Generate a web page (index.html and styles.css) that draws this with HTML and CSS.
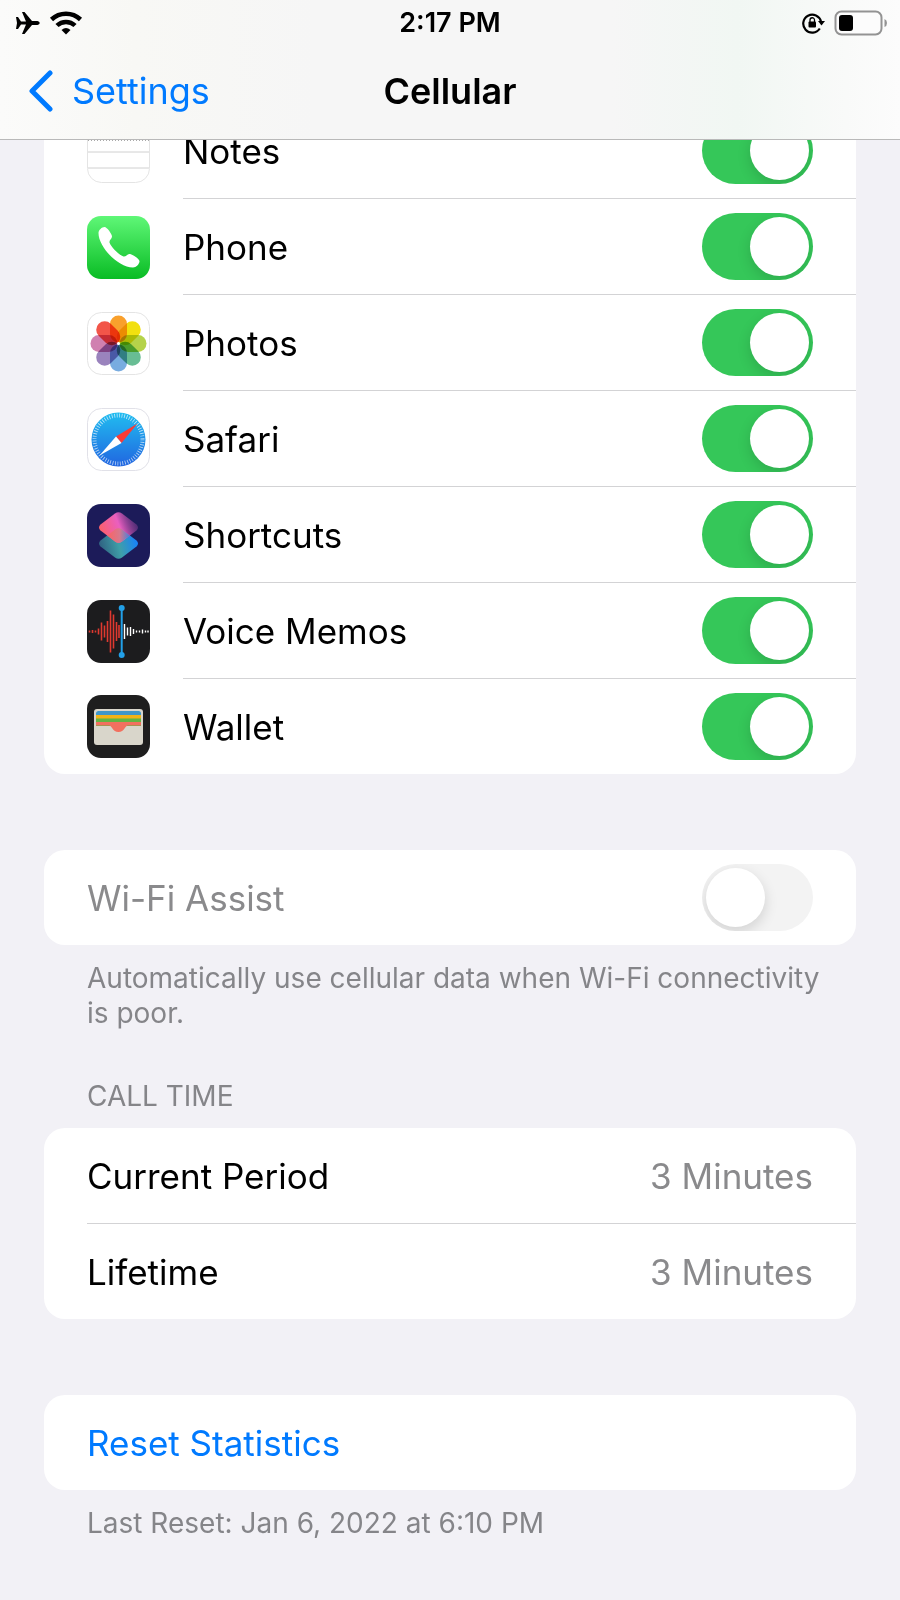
FILE: index.html
```html
<!DOCTYPE html>
<html lang="en">
<head>
  <meta charset="UTF-8">
  <meta name="viewport" content="width=device-width, initial-scale=1">
  <title>Cellular</title>
  <link rel="stylesheet" href="styles.css">
</head>
<body>
  <header class="header">
    <div class="status-bar">
      <div class="status-left">
        <svg width="24" height="22" viewBox="0 0 24 22"><path d="M0 5h2l3 4.500h5L6 0h2.500l7.500 9h5.500q2 .6 2.300 2q-.3 1.400-2.300 2H16l-7.500 9H6l4-9.500H5L2 17H0l1-6z"/></svg>
        <svg width="34" height="24" viewBox="0 0 34 24">
          <path d="M2.500 8.500a21 21 0 0 1 29 0" fill="none" stroke="#000" stroke-width="4.500"/>
          <path d="M8 14.500a13 13 0 0 1 18 0" fill="none" stroke="#000" stroke-width="4.500"/>
          <path d="M12.500 19q4.500-4 9 0L17 23.500z"/>
        </svg>
      </div>
      <time class="clock">2:17 PM</time>
      <div class="status-right">
        <svg width="23" height="22" viewBox="0 0 23 22">
          <path d="M17.800 16.500A9 9 0 1 1 19 9.500" fill="none" stroke="#000" stroke-width="2.200"/>
          <path d="M16 9h7l-3.500 4.500z"/>
          <rect x="6.500" y="9.500" width="7.500" height="6" rx="1"/>
          <path d="M8 10V8a2.250 2.250 0 0 1 4.500 0v2" fill="none" stroke="#000" stroke-width="1.300"/>
        </svg>
        <svg width="54" height="26" viewBox="0 0 54 26">
          <rect x="1.500" y="1.500" width="46" height="23" rx="6" fill="#fcfcfc" stroke="#939393" stroke-width="2"/>
          <rect x="5" y="5" width="14" height="16" rx="3"/>
          <path d="M50.500 9q2.500 1 2.500 4t-2.500 4z" fill="#939393"/>
        </svg>
      </div>
    </div>
    <nav class="nav">
      <a href="#" class="back">
        <svg width="26" height="42" viewBox="0 0 26 42"><path d="M22 3L4 21l18 18" fill="none" stroke="#007aff" stroke-width="5" stroke-linecap="round" stroke-linejoin="round"/></svg>
        Settings
      </a>
      <h1>Cellular</h1>
    </nav>
  </header>

  <main>
    <ul class="card apps">
      <li class="row">
        <svg class="app-icon" viewBox="0 0 63 63">
          <rect x=".5" y=".5" width="62" height="62" rx="14" fill="#fff" stroke="#e4e4e4"/>
          <path d="M.5 17V14.500a14 14 0 0 1 14-14h34a14 14 0 0 1 14 14V17z" fill="#fc0"/>
          <path d="M1 20.500h61" stroke="#aaa" stroke-dasharray="1 2"/>
          <path d="M1 32h61M1 48h61" stroke="#d0d0d0"/>
        </svg>
        <div class="row-body">
          <label for="notes">Notes</label>
          <input type="checkbox" class="switch" id="notes" checked>
        </div>
      </li>
      <li class="row">
        <svg class="app-icon" viewBox="0 0 63 63">
          <defs><linearGradient id="phoneBg" x2="0" y2="1"><stop stop-color="#5ff777"/><stop offset="1" stop-color="#09bc24"/></linearGradient></defs>
          <rect width="63" height="63" rx="14" fill="url(#phoneBg)"/>
          <path d="M11.500 17C11.500 14 15 11 17.500 11C20 11 25 18 25 20.500C25 23 22 24 22.500 26.500C24 31 32 39 36.500 40.500C39 41 40.500 37.500 43 38C45.500 38.500 52 42.500 52.500 45C52.500 48 49 51.500 46 51.500C31 51.500 11.500 31 11.500 17Z" fill="#fff"/>
        </svg>
        <div class="row-body">
          <label for="phone">Phone</label>
          <input type="checkbox" class="switch" id="phone" checked>
        </div>
      </li>
      <li class="row">
        <svg class="app-icon" viewBox="0 0 63 63">
          <rect x=".5" y=".5" width="62" height="62" rx="14" fill="#fff" stroke="#e4e4e4"/>
          <g class="petals" transform="translate(31.500 31.500)">
            <rect x="-8.500" y="-28" width="17" height="27" rx="8.500" fill="#f9a02c"/>
            <rect x="-8.500" y="-28" width="17" height="27" rx="8.500" fill="#f2e00f" transform="rotate(45)"/>
            <rect x="-8.500" y="-28" width="17" height="27" rx="8.500" fill="#b5d34a" transform="rotate(90)"/>
            <rect x="-8.500" y="-28" width="17" height="27" rx="8.500" fill="#68bd94" transform="rotate(135)"/>
            <rect x="-8.500" y="-28" width="17" height="27" rx="8.500" fill="#78ace0" transform="rotate(180)"/>
            <rect x="-8.500" y="-28" width="17" height="27" rx="8.500" fill="#9a83bd" transform="rotate(225)"/>
            <rect x="-8.500" y="-28" width="17" height="27" rx="8.500" fill="#d080b0" transform="rotate(270)"/>
            <rect x="-8.500" y="-28" width="17" height="27" rx="8.500" fill="#f25549" transform="rotate(315)"/>
          </g>
          <circle cx="31.500" cy="31.500" r="1.500" fill="#fff"/>
        </svg>
        <div class="row-body">
          <label for="photos">Photos</label>
          <input type="checkbox" class="switch" id="photos" checked>
        </div>
      </li>
      <li class="row">
        <svg class="app-icon" viewBox="0 0 63 63">
          <defs><linearGradient id="safariBg" x2="0" y2="1"><stop stop-color="#21bdf0"/><stop offset="1" stop-color="#2165e0"/></linearGradient></defs>
          <rect x=".5" y=".5" width="62" height="62" rx="14" fill="#fff" stroke="#e1e1e8"/>
          <circle cx="31.500" cy="31.500" r="27" fill="url(#safariBg)"/>
          <circle cx="31.500" cy="31.500" r="24" fill="none" stroke="#fff" stroke-opacity=".7" stroke-width="4" stroke-dasharray=".8 1.713"/>
          <path d="M50.500 15.500L34.500 35L29 28.500z" fill="#fb3b36"/>
          <path d="M12.500 47.500L29 28.500L34.500 35z" fill="#fff"/>
        </svg>
        <div class="row-body">
          <label for="safari">Safari</label>
          <input type="checkbox" class="switch" id="safari" checked>
        </div>
      </li>
      <li class="row">
        <svg class="app-icon" viewBox="0 0 63 63">
          <defs>
            <linearGradient id="layerTop" x1="0" y1=".7" x2="1" y2=".4"><stop stop-color="#ff6060"/><stop offset=".55" stop-color="#ea5fc0"/><stop offset="1" stop-color="#7b3a8c" stop-opacity=".5"/></linearGradient>
            <linearGradient id="layerBottom" x1="0" y1=".6" x2="1" y2=".4"><stop stop-color="#2f5f80"/><stop offset=".5" stop-color="#3f9fa8"/><stop offset="1" stop-color="#1580ff"/></linearGradient>
            <linearGradient id="layerMix" x1="0" x2="1"><stop stop-color="#fb6464"/><stop offset=".55" stop-color="#d8788c"/><stop offset="1" stop-color="#4a80d8"/></linearGradient>
          </defs>
          <rect width="63" height="63" rx="14" fill="#1c1b59"/>
          <path d="M28 25.500Q31.500 23 35 25.500L49.500 36.500Q52.500 39.500 49.500 42.500L35 53.500Q31.500 56 28 53.500L13.500 42.500Q10.500 39.500 13.500 36.500z" fill="url(#layerBottom)"/>
          <path d="M28 9.500Q31.500 7 35 9.500L49.500 20.500Q52.500 23.500 49.500 26.500L35 37.500Q31.500 40 28 37.500L13.500 26.500Q10.500 23.500 13.500 20.500z" fill="url(#layerTop)"/>
          <path d="M20.500 31.500L28 25.500Q31.500 23 35 25.500L42.500 31.500L35 37.500Q31.500 40 28 37.500z" fill="url(#layerMix)"/>
        </svg>
        <div class="row-body">
          <label for="shortcuts">Shortcuts</label>
          <input type="checkbox" class="switch" id="shortcuts" checked>
        </div>
      </li>
      <li class="row">
        <svg class="app-icon" viewBox="0 0 63 63">
          <rect width="63" height="63" rx="14" fill="#1c1c1e"/>
          <path d="M2.500 30.500v2M5.500 30v3M8.500 30.500v2M11.500 28.500v6M14.500 22.500v18M17.500 25.500v12M20.500 21v21M23.500 10.500v42M26.500 14.500v34M29.500 22v19M32 25v13" stroke="#e0392f" stroke-width="1.600"/>
          <path d="M37.500 24v15M40.500 27.500v8M43.500 27v9M46.500 29v5M49.500 30.500v2M52.500 30.500v2M55.500 29.500v4M58.500 30.500v2M61 30.500v2" stroke="#fff" stroke-width="1.400"/>
          <path d="M34.700 8v47" stroke="#22a0e8" stroke-width="2"/>
          <circle cx="34.700" cy="8" r="3" fill="#22a0e8"/>
          <circle cx="34.700" cy="55" r="3" fill="#22a0e8"/>
        </svg>
        <div class="row-body">
          <label for="voice-memos">Voice Memos</label>
          <input type="checkbox" class="switch" id="voice-memos" checked>
        </div>
      </li>
      <li class="row">
        <svg class="app-icon" viewBox="0 0 63 63">
          <rect width="63" height="63" rx="14" fill="#1e1e1e"/>
          <rect x="7" y="14" width="49" height="36" rx="3" fill="#d9d6cb"/>
          <path d="M9 31V18.500Q9 16 11.500 16h40Q54 16 54 18.500V31z" fill="#3f97c9"/>
          <path d="M9 20h45v11H9z" fill="#f3b316"/>
          <path d="M9 23.500h45V31H9z" fill="#63b444"/>
          <path d="M9 27h45v3.500H41c-3 0-3.500 6.500-9.500 6.500s-6.500-6.500-9.500-6.500H9z" fill="#f2705f"/>
        </svg>
        <div class="row-body">
          <label for="wallet">Wallet</label>
          <input type="checkbox" class="switch" id="wallet" checked>
        </div>
      </li>
    </ul>

    <section class="group">
      <div class="card">
        <div class="row">
          <div class="row-body disabled">
            <label for="wifi-assist">Wi-Fi Assist</label>
            <input type="checkbox" class="switch" id="wifi-assist" disabled>
          </div>
        </div>
      </div>
      <p class="note">Automatically use cellular data when Wi-Fi connectivity is poor.</p>
    </section>

    <section class="call-time">
      <h2>CALL TIME</h2>
      <dl class="card">
        <div class="row">
          <div class="row-body"><dt>Current Period</dt><dd>3 Minutes</dd></div>
        </div>
        <div class="row">
          <div class="row-body"><dt>Lifetime</dt><dd>3 Minutes</dd></div>
        </div>
      </dl>
    </section>

    <section class="group">
      <div class="card">
        <button type="button" class="reset">Reset Statistics</button>
      </div>
      <p class="note">Last Reset: Jan 6, 2022 at 6:10 PM</p>
    </section>
  </main>
</body>
</html>
```

FILE: styles.css
```css
* {
  box-sizing: border-box;
}
body {
  margin: 0;
  background-color: #f2f1f6;
  color: #000;
  font-family: Inter, "Liberation Sans", sans-serif;
  font-size: 35px;
  line-height: 44px;
}
h1, h2, p, ul, dl, dd {
  margin: 0;
  padding: 0;
}
svg {
  display: block;
  flex: none;
}

/* Header */
.header {
  position: sticky;
  top: 0;
  z-index: 1;
  border-bottom: 1px solid #b9b9b9;
  background: linear-gradient(90deg, #fbfbfa 0%, #f8f8f5 15%, #f6f6f6 35%, #f6f6f6 68%, #f1f7f3 82%, #f9faf9 94%, #fcfcfc 100%);
}
.status-bar {
  display: grid;
  grid-template-columns: 1fr auto 1fr;
  align-items: center;
  height: 46px;
  padding: 0 12px;
}
.status-left,
.status-right {
  display: flex;
  align-items: center;
  gap: 9px;
}
.status-left {
  padding-left: 4px;
}
.status-right {
  justify-content: flex-end;
}
.clock {
  font-size: 27px;
  font-weight: 600;
}
.nav {
  display: grid;
  grid-template-columns: 1fr auto 1fr;
  align-items: center;
  height: 93px;
  padding: 0 28px 3px;
}
.back {
  display: flex;
  align-items: center;
  gap: 18px;
  color: #007aff;
  font-size: 36px;
  text-decoration: none;
}
h1 {
  font-size: 36px;
  font-weight: 600;
}

/* Lists */
main {
  padding: 0 44px;
}
.card {
  border-radius: 21px;
  background-color: #fff;
  overflow: hidden;
}
/* the list is scrolled part way under the header */
.apps {
  margin-top: -37px;
  list-style: none;
}
.row {
  display: flex;
  align-items: center;
  padding-left: 43px;
}
.row-body {
  flex: 1;
  display: flex;
  align-items: center;
  justify-content: space-between;
  height: 96px;
  padding-right: 43px;
  border-bottom: 1px solid #d3d3d5;
}
.row:last-child .row-body {
  height: 95px;
  border-bottom: none;
}
.app-icon {
  width: 63px;
  height: 63px;
  margin-right: 33px;
}
.petals rect {
  mix-blend-mode: multiply;
}
.disabled,
dd {
  color: #8a8a8c;
}

/* Switches */
.switch {
  appearance: none;
  display: flex;
  width: 111px;
  height: 67px;
  margin: 0;
  padding: 4px;
  border-radius: 34px;
  background-color: #f3f3f3;
  overflow: hidden;
}
.switch::before {
  content: "";
  width: 59px;
  height: 59px;
  border-radius: 50%;
  background-color: #fff;
  box-shadow: 0 5px 14px rgba(0, 0, 0, 0.14);
}
.switch:checked {
  justify-content: flex-end;
  background-color: #35c759;
}

/* Groups */
.group {
  margin-top: 76px;
}
.note,
h2 {
  padding: 0 24px 0 43px;
  color: #858589;
  font-size: 28px;
  font-weight: 400;
  line-height: 35px;
}
.note {
  padding-top: 16px;
}
.call-time {
  margin-top: 48px;
}
h2 {
  margin-bottom: 14px;
}
.reset {
  display: block;
  width: 100%;
  height: 95px;
  padding: 0 43px;
  border: none;
  background: none;
  color: #007aff;
  font: inherit;
  text-align: left;
}
```
